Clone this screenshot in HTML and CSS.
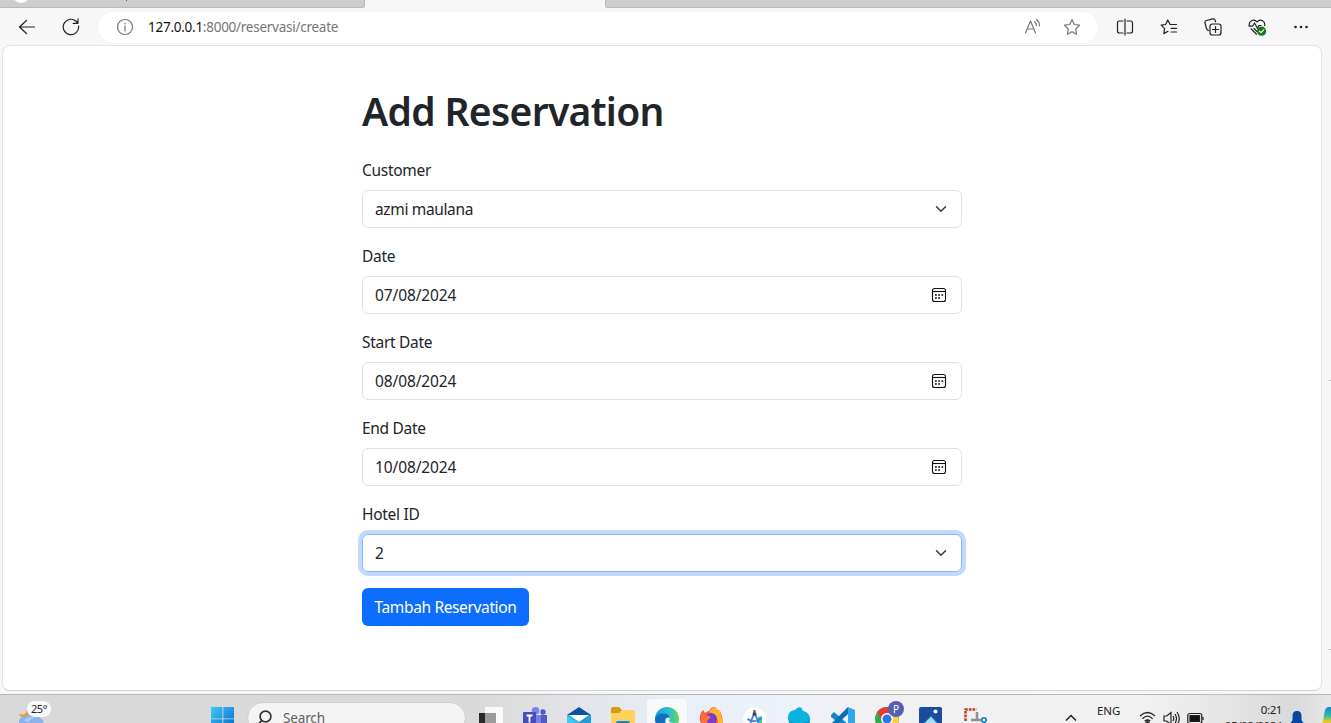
FILE: index.html
```html
<!DOCTYPE html>
<html lang="id">
<head>
<meta charset="utf-8">
<title>Add Reservation</title>
<link rel="stylesheet" href="styles.css">
</head>
<body>
<div class="tabs">
  <div class="tab-group first"><span class="favicon"></span><span class="tab-mark"></span></div>
  <div class="active-tab"></div>
  <div class="tab-group last"></div>
</div>
<header class="toolbar">
  <svg class="ic back" viewBox="0 0 18 18"><path d="M16.500 9H1.500M8.500 2.500 1.500 9l7 6.500"/></svg>
  <svg class="ic reload" viewBox="0 0 18 18"><path d="M16.600 8.200A7.700 7.700 0 1 1 13.800 3L16 5M16 .8V5.300h-4.800"/></svg>
  <div class="address">
    <svg class="ic info" viewBox="0 0 18 18"><circle cx="9" cy="9" r="7.500"/><path d="M9 8v5M9 5v1"/></svg>
    <span class="url"><b>127.0.0.1</b>:8000/reservasi/create</span>
    <svg class="ic read" viewBox="0 0 18 18"><path d="M1.500 15 6.500 3l5 12M3.200 11h6.600M10.500 3.500q2 1.500 2 4M12.500 1.500q3 2.300 3 6.300"/></svg>
    <svg class="ic star" viewBox="0 0 18 18"><path d="m9 1.600 2.300 4.900 5.200.7-3.800 3.700.9 5.300L9 13.700l-4.600 2.500.9-5.300L1.500 7.200l5.200-.7z"/></svg>
  </div>
  <div class="actions">
    <svg class="ic" viewBox="0 0 18 18"><path d="M7 3H3.500Q1.500 3 1.500 5v8q0 2 2 2H7M11 3h3.500q2 0 2 2v8q0 2-2 2H11M9 1v16"/></svg>
    <svg class="ic" viewBox="0 0 18 18"><path d="M10 6.300 7.800 2 5.600 6.500l-4.400.7 3.400 3.400-.8 5 4.200-2.300M10 6.500h6.500M11 10.300h5.500M11 14h5.500"/></svg>
    <svg class="ic" viewBox="0 0 18 18"><rect x="6" y="6" width="11" height="11" rx="2.300"/><path d="M11.500 8.500v6M8.500 11.500h6M4.500 12.500Q3 12 2.500 10.500L1 5q-.4-2 1.300-2.500l6.500-1.600q1.700-.4 2.300 1.200l.5 1.700"/></svg>
    <svg class="ic" viewBox="0 0 18 18"><path d="M1.400 7.500C.3 3.500 5.700-.2 9 4c3.300-4.200 8.700-.5 7.600 3.500M1 8.200h3.500l2-3.200 3 5.500 1.500-3H13M3 10.800l5.500 5.400M6 10.500l3 3"/><circle class="green" cx="13.600" cy="13.200" r="4.600"/><path class="tick" d="m11.500 13.200 1.500 1.500 2.800-2.900"/></svg>
    <svg class="ic" viewBox="0 0 18 18"><g class="dots"><circle cx="3.500" cy="9" r="1.300"/><circle cx="9" cy="9" r="1.300"/><circle cx="14.500" cy="9" r="1.300"/></g></svg>
  </div>
</header>
<div class="viewport">
  <main class="page">
    <form class="form">
      <h1>Add Reservation</h1>
      <label>Customer</label>
      <div class="control"><span>azmi maulana</span><svg class="chev" viewBox="0 0 16 16"><path d="m2 5 6 6 6-6"/></svg></div>
      <label>Date</label>
      <div class="control"><span class="date">07/08/2024</span><svg class="cal" viewBox="0 0 16 16"><rect x="1.500" y="1.500" width="13" height="13" rx="2"/><path d="M2 4.500h12"/><path class="cells" d="M4 8h8.500M4 11h5.500"/></svg></div>
      <label>Start Date</label>
      <div class="control"><span class="date">08/08/2024</span><svg class="cal" viewBox="0 0 16 16"><rect x="1.500" y="1.500" width="13" height="13" rx="2"/><path d="M2 4.500h12"/><path class="cells" d="M4 8h8.500M4 11h5.500"/></svg></div>
      <label>End Date</label>
      <div class="control"><span class="date">10/08/2024</span><svg class="cal" viewBox="0 0 16 16"><rect x="1.500" y="1.500" width="13" height="13" rx="2"/><path d="M2 4.500h12"/><path class="cells" d="M4 8h8.500M4 11h5.500"/></svg></div>
      <label>Hotel ID</label>
      <div class="control focus"><span>2</span><svg class="chev" viewBox="0 0 16 16"><path d="m2 5 6 6 6-6"/></svg></div>
      <button type="button" class="submit">Tambah Reservation</button>
    </form>
  </main>
  <aside class="edge-marks"><i></i><i></i></aside>
</div>
<footer class="taskbar">
  <div class="weather">
    <svg viewBox="0 0 26 18"><path fill="#e99a35" d="m1 5 5 .5L10 1l1 6-6 3z"/><path fill="#8db4ea" d="M1 18v-7q2-4 7-4 4-4 10-1 3 0 4 3 4 1 4 9z"/><path fill="#b2cff7" d="M6 11q6-5 12-1-5-2-8 3z"/></svg>
    <span class="temp">25°</span>
  </div>
  <svg class="start" viewBox="0 0 24 24"><defs><linearGradient id="win" x2="1" y2="1"><stop stop-color="#40c8fb"/><stop offset="1" stop-color="#0067c5"/></linearGradient></defs><path fill="url(#win)" d="M0 0h11.400v11.400H0zM12.300 0H23v11.400H12.300zM0 12.300h11.400V23H0zM12.300 12.300H23V23H12.300z"/></svg>
  <div class="search"><svg viewBox="0 0 16 16"><circle cx="8.500" cy="6.500" r="5.400"/><path d="m4.700 10.500-3.700 4"/></svg><span>Search</span></div>
  <div class="apps">
    <div class="app"><svg viewBox="0 0 24 24"><path fill="#fafafa" d="M6 0h18v16H6z"/><path fill="#292929" d="M0 6h17v18H0z"/><path fill="#9b9b9b" d="M6 6h11v10H6z"/></svg></div>
    <div class="app"><svg viewBox="0 0 24 24"><circle cx="12.500" cy="3.800" r="3.800" fill="#7b83eb"/><circle cx="20" cy="5" r="2.700" fill="#5059c9"/><path fill="#5059c9" d="M16 8h8v11h-8z"/><path fill="#7b83eb" d="M8 8h10v16H8z"/><rect y="5" width="13" height="14" rx="1" fill="#464eb8"/><path d="M3.500 8.500h6M6.500 8.500v7" stroke="#fff" stroke-width="1.800"/></svg></div>
    <div class="app"><svg viewBox="0 0 24 24"><path fill="#0754a4" d="M0 8 12 0l12 8v4H0z"/><path fill="#229bdb" d="M0 8h24v16H0z"/><path fill="#42c7f4" d="M0 8l12 8-12 8z"/><path fill="#fff" d="M2 8h20l-10 7z"/></svg></div>
    <div class="app"><svg viewBox="0 0 24 24"><path fill="#d99a11" d="M0 2q0-2 2-2h6l3 3H24v7H0z"/><path fill="#ffd260" d="M0 6h8l3-3h13v21H0z"/><path fill="#1684cf" d="M5 16q0-2 2-2h10q2 0 2 2v8H5z"/></svg></div>
    <div class="app current"><svg viewBox="0 0 24 24"><defs><linearGradient id="edge"><stop stop-color="#1a9ee4"/><stop offset=".55" stop-color="#25bed0"/><stop offset="1" stop-color="#66d757"/></linearGradient></defs><circle cx="12" cy="12" r="12" fill="url(#edge)"/><path fill="#116fc1" d="M0 12Q2 6 9 6.500q6 .5 6 5.500-4-3-5 1-1 6 5 11Q2 25 0 12z"/><path fill="#f7f9fa" d="M10.500 14q0-4 3.500-3.500 2 1-.2 3.500 1 2.500 9.200 2l-4 8q-8-3-8.500-10z"/></svg></div>
    <div class="app"><svg viewBox="0 0 24 24"><path fill="#ff5a32" d="M1 14Q0 7 4 3l2 3q2-2 4-2 3-5 6-4 2 3 5 4 4 8 2 14l-8 6H7z"/><path fill="#ffb52e" d="M10 5q4-5 6-5 2 3 5 4l3 12-6 7q4-14-8-18z"/><circle cx="12" cy="12" r="6" fill="#7b3bd0"/><path fill="#ff7139" d="M3 5q4 3 9 5l-4 4 2 6q-8-1-8-10z"/></svg></div>
    <div class="app"><svg viewBox="0 0 24 24"><circle cx="11.500" cy="12" r="11.500" fill="#fff"/><path fill="#43d08b" d="m15 10 4-1v7h-5z"/><path fill="none" stroke="#387de5" stroke-width="1.800" d="m11 7-5 12M12 7l5 12M4.500 12q7 5 14-1"/><circle cx="11.500" cy="7" r="2" fill="#3f4a5b"/><path d="M11.500 3v3" stroke="#3f4a5b" stroke-width="2"/></svg></div>
    <div class="app"><svg viewBox="0 0 24 24"><path fill="#09b3df" d="M1 12Q0 4 8 3q3-4 7-2-1 2 4 4 5 3 4 10l-3 9H4z"/><path fill="#079bcb" d="M3 14q9 5 20-1l-3 11H4z"/></svg></div>
    <div class="app"><svg viewBox="0 0 24 24"><path fill="#1486cf" d="m0 8 3-3 15 13v6L0 10z"/><path fill="#0870b8" d="M0 17 17 0v7L3 20z"/><path fill="#30a8ed" d="m17 0 7 3v18l-7 3z"/></svg></div>
    <div class="app"><svg viewBox="0 0 24 24"><circle cx="12" cy="12" r="12" fill="#2dab50"/><path fill="#e53c31" d="M2 5q8-10 20 1v2H12l-5 6z"/><path fill="#ffd043" d="M12 8h11q3 10-6 15h-6l6-9z"/><circle cx="12" cy="12" r="6" fill="#fff"/><circle cx="12" cy="12" r="4.500" fill="#2878e8"/></svg><span class="badge">P</span></div>
    <div class="app"><svg viewBox="0 0 24 24"><rect width="23" height="24" rx="2" fill="#1c4a9c"/><circle cx="16.500" cy="4.500" r="2" fill="#fff"/><path fill="#34aef3" d="m1 20 11-11 11 12v3H1z"/><path fill="#a7ddff" d="m6 16 6-6 6 7z"/></svg></div>
    <div class="app"><svg viewBox="0 0 24 24"><path fill="none" stroke="#c23d1d" stroke-width="2.500" stroke-dasharray="2.700 1" d="M2.500 14V2.500H13.500"/><path d="M14 5v8H8M14 13h5" fill="none" stroke="#8b949c" stroke-width="2.500"/><circle cx="21" cy="13" r="2.200" fill="#fff" stroke="#168ac9" stroke-width="1.800"/></svg></div>
  </div>
  <svg class="up" viewBox="0 0 12 8"><path d="m1 6.500 5-5 5 5"/></svg>
  <span class="lang">ENG</span>
  <div class="status">
    <svg viewBox="0 0 17 17"><path d="M1 6q7.500-7 15 0M3.400 8.700q5.100-5 10.200 0M5.700 11.300q2.800-2.600 5.600 0"/><circle cx="8.500" cy="13" r="1.500" fill="#222"/></svg>
    <svg viewBox="0 0 17 17"><path d="M1 6h2.700L8 2.500v12L3.700 11H1zM10 6q1.500 2.500 0 5M12 4q3 4.500 0 9M14 2q4.500 6.500 0 13"/></svg>
    <svg viewBox="0 0 17 17"><rect x=".8" y="3.500" width="14" height="10" rx="2"/><path fill="#111" d="M3 5.700h9.500v5.600H3zM16 7v3"/></svg>
  </div>
  <div class="clock"><span>0:21</span><span>05/08/2024</span></div>
  <svg class="bell" viewBox="0 0 14 18"><path fill="#0645a0" d="M2.500 9V5Q2.500 0 7 0t4.500 5v4l2.500 4v3H0v-3z"/></svg>
  <svg class="copilot" viewBox="0 0 9 18"><defs><linearGradient id="co" y2="1" x2="0"><stop stop-color="#1685d1"/><stop offset=".5" stop-color="#36bda0"/><stop offset=".8" stop-color="#e5c92f"/></linearGradient></defs><path fill="url(#co)" d="M3 3q1-3 4-3h2v18H0z"/></svg>
</footer>
</body>
</html>
```
FILE: styles.css
```css
*{box-sizing:border-box}
body{margin:0;width:1331px;height:723px;overflow:hidden;display:flex;flex-direction:column;background:#f7f7f7;color:#212529;font:16px/24px "Noto Sans","Open Sans",sans-serif}
svg{display:block;flex:none}
.tabs{height:8px;display:flex;flex:none}
.tab-group{background:#cdcdcd;border-bottom:1px solid #b9b9b9}
.first{width:365px;border-right:1px solid #b9b9b9;border-radius:0 0 3px;display:flex;overflow:hidden}
.last{flex:1;border-left:1px solid #b9b9b9;border-radius:0 0 0 3px}
.active-tab{width:240px}
.favicon{width:18px;height:18px;margin:-15px 0 0 12px;border-radius:50%;background:#fff}
.tab-mark{width:1px;height:1px;margin-left:96px;background:#555}
.toolbar{height:37px;flex:none;display:flex;align-items:center;padding:1px 21px 0 18px}
.ic{width:18px;height:18px;fill:none;stroke:#222;stroke-width:1.2;stroke-linecap:round;stroke-linejoin:round}
.reload{margin-left:26px}
.address{width:1000px;height:31px;margin-left:18px;border-radius:16px;background:#fff;display:flex;align-items:center;padding:0 17px 0 18px;box-shadow:0 0 1px #e4e4e4}
.info,.read,.star{stroke:#777}
.url{margin-left:14px;flex:1;font-size:13.500px;letter-spacing:-.26px;color:#757575;white-space:nowrap}
.url b{color:#111;font-weight:400}
.star{margin-left:21px}
.actions{flex:1;display:flex;justify-content:space-between;margin-left:18px}
.green{fill:#15771b;stroke:none}.tick{stroke:#fff}
.dots{fill:#222;stroke:none}
.viewport{flex:1;min-height:0;display:flex;padding:0 0 3px 2px}
.page{width:1320px;background:#fff;border:1px solid #e3e3e3;border-bottom-color:#d3d3d3;border-radius:8px;display:flex;justify-content:center}
.edge-marks{flex:1;display:flex;flex-direction:column;align-items:flex-end;padding-top:335px;gap:268px}
.edge-marks i{width:2px;height:1px;background:#bbb}
.form{width:600px;margin-top:42px;display:flex;flex-direction:column;align-items:stretch}
h1{margin:0 0 24px;font-size:39px;line-height:46px;font-weight:560;letter-spacing:-.68px;white-space:nowrap}
label{height:24px;margin-bottom:8px;font-size:15.500px;line-height:25px;letter-spacing:-.3px}
.control{height:38px;margin-bottom:16px;border:1px solid #dee2e6;border-radius:6px;padding:0 12px;display:flex;align-items:center;justify-content:space-between;font-size:15.500px;letter-spacing:-.35px}
.date{letter-spacing:-.12px}
.chev{width:12px;height:12px;margin-right:2px;fill:none;stroke:#343a40;stroke-width:2;stroke-linecap:round;stroke-linejoin:round}
.cal{width:16px;height:16px;margin-right:2px;fill:none;stroke:#111;stroke-width:1.1}
.cells{stroke-width:1.700;stroke-dasharray:1.800 1.400}
.focus{border-color:#86b7fe;box-shadow:0 0 0 4px #c2d9fe}
.submit{align-self:flex-start;width:167px;height:38px;border:0;border-radius:6px;background:#0d6efd;color:#fff;font:15.500px/24px "Noto Sans",sans-serif;letter-spacing:-.36px;padding:0;white-space:nowrap}
.taskbar{height:29px;flex:none;display:flex;align-items:flex-start;overflow:hidden;border-top:1px solid #b9b9b9;background:linear-gradient(90deg,#d9d9d9 0,#dadada 36%,#e9edf5 50%,#edf1fa 58%,#f1f1f1 66%,#f2f2f2 86%,#dadada 97%,#e6e6e6)}
.weather{width:193px;margin-left:18px;display:flex;height:28px}
.weather svg{width:26px;height:18px;margin-top:14px}
.temp{height:16px;width:24px;margin:6px 0 0 -17px;border-radius:8px;background:#fafafa;font-size:11px;line-height:15px;text-align:center;letter-spacing:-.4px;z-index:1}
.start{width:24px;height:24px;margin-top:12px}
.search{width:219px;height:32px;margin:7px 0 0 12px;border:1px solid #d0d0d0;border-radius:16px;background:#f4f4f4;display:flex;padding:7px 9px;color:#606060;font-size:13.500px;line-height:16px;letter-spacing:-.15px}
.search svg{width:16px;height:16px;margin-right:10px;fill:none;stroke:#333;stroke-width:1.700}
.apps{display:flex;margin-left:5px}
.app{width:40px;height:40px;margin:4px 4px 0 0;padding:8px;display:flex;position:relative}
.app svg{width:24px;height:24px}
.current{background:#f8f9fb;border-radius:4px}
.badge{position:absolute;left:21px;top:2px;width:16px;height:16px;border-radius:50%;background:#5360b5;color:#fff;font-size:10px;line-height:16px;text-align:center}
.up{width:12px;height:8px;margin:19px 0 0 66px;fill:none;stroke:#222;stroke-width:1.500}
.lang{width:42px;margin:6px 0 0 20px;font-size:11.500px;line-height:20px;letter-spacing:-.1px;color:#222}
.status{display:flex;gap:7px;margin-top:15px}
.status svg{width:17px;height:17px;fill:none;stroke:#222;stroke-width:1.200}
.clock{width:78px;margin-top:7px;display:flex;flex-direction:column;align-items:flex-end;font-size:11.500px;line-height:16px;letter-spacing:-.4px;color:#222}
.bell{width:14px;height:18px;margin:16px 0 0 8px}
.copilot{width:9px;height:18px;margin:12px 0 0 auto}
```
